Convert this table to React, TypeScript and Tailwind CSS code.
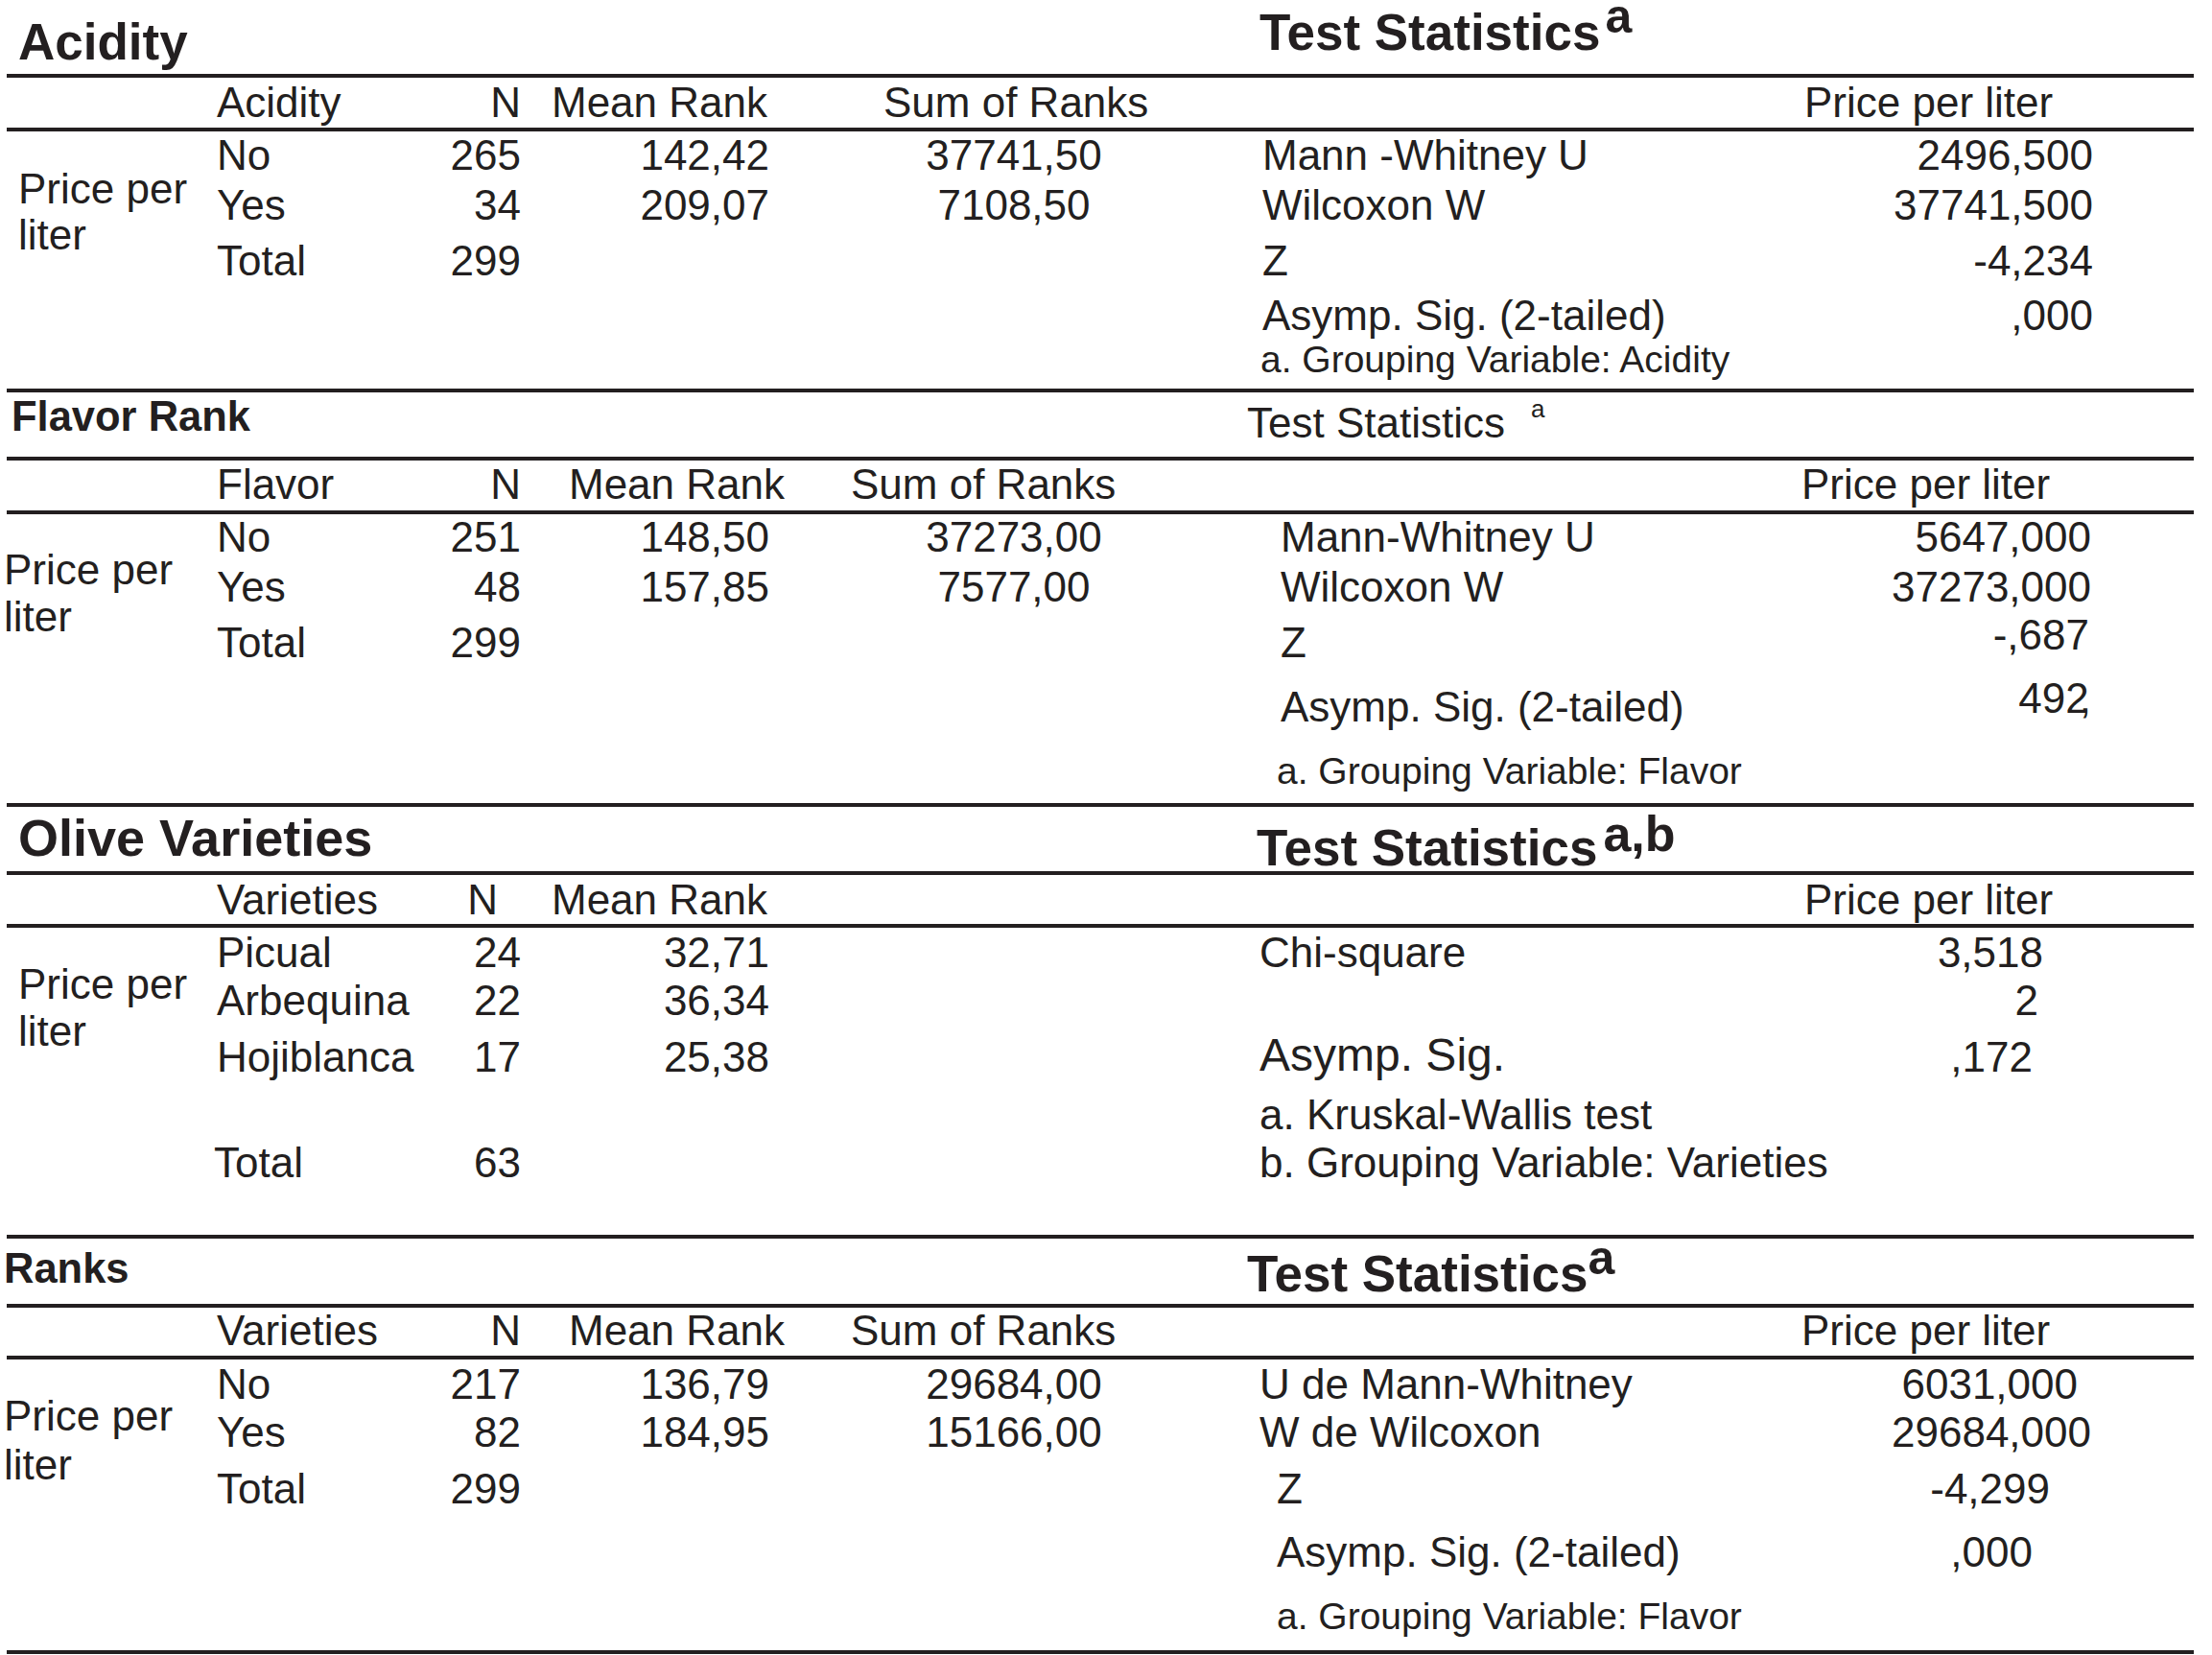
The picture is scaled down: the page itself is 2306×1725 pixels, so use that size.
import type { ReactNode } from "react";

function Rule() {
    return <div className="ml-[7px] h-[4px] w-[2280px] bg-[#231f20]" />;
}

type DataRowProps = {
    className: string;
    cat: ReactNode;
    n?: string;
    mean?: string;
    sum?: string;
};

function DataRow({ className, cat, n, mean, sum }: DataRowProps) {
    return (
        <div className={`flex ${className}`}>
            <div className="w-[230px]">{cat}</div>
            <div className="w-[87px] text-right">{n}</div>
            <div className="w-[259px] text-right">{mean}</div>
            <div className="w-[510px] text-center">{sum}</div>
        </div>
    );
}

type StatRowProps = {
    className: string;
    label?: ReactNode;
    value?: ReactNode;
};

function StatRow({ className, label, value }: StatRowProps) {
    return (
        <div className={`flex items-start justify-between ${className}`}>
            <span>{label}</span>
            <span>{value}</span>
        </div>
    );
}

export default function App() {
    return (
        <div className="min-h-[1725px] w-[2306px] whitespace-nowrap bg-white font-['Liberation_Sans',Arial,Helvetica,sans-serif] text-[44px] leading-[44px] text-[#231f20]">
            {/* Acidity */}
            <section>
                <div className="flex h-[77px]">
                    <div className="w-[1300px] pl-[19px] pt-[17px] text-[53px] font-bold leading-[53px]">
                        Acidity
                    </div>
                    <div className="flex items-start pl-[13px]">
                        <div className="mt-[7px] text-[53px] font-bold leading-[53px]">Test Statistics</div>
                        <div className="ml-[5px] mt-[7px] text-[50px] font-bold leading-[20px]">a</div>
                    </div>
                </div>
                <Rule />
                <div className="flex h-[52px] pt-[4px]">
                    <div className="w-[226px]" />
                    <div className="w-[230px]">Acidity</div>
                    <div className="w-[87px] text-right">N</div>
                    <div className="w-[259px] pl-[32px]">Mean Rank</div>
                    <div className="w-[510px] pl-[119px]">Sum of Ranks</div>
                    <div className="pl-[569px]">Price per liter</div>
                </div>
                <Rule />
                <div className="flex h-[268px]">
                    <div className="w-[226px] pl-[19px] pt-[36px] leading-[48px]">
                        Price per
                        <br />
                        liter
                    </div>
                    <div className="flex w-[1086px] flex-col pt-[3px]">
                        <DataRow className="h-[52px]" cat="No" n="265" mean="142,42" sum="37741,50" />
                        <DataRow className="h-[58px]" cat="Yes" n="34" mean="209,07" sum="7108,50" />
                        <DataRow className="h-[44px]" cat="Total" n="299" />
                    </div>
                    <div className="flex flex-col pt-[3px]">
                        <StatRow className="h-[52px] w-[870px] pl-[4px]" label="Mann -Whitney U" value="2496,500" />
                        <StatRow className="h-[58px] w-[870px] pl-[4px]" label="Wilcoxon W" value="37741,500" />
                        <StatRow className="h-[57px] w-[870px] pl-[4px]" label="Z" value="-4,234" />
                        <StatRow className="h-[48px] w-[870px] pl-[4px]" label="Asymp. Sig. (2-tailed)" value=",000" />
                        <div className="pl-[2px] text-[39px] leading-[39px]">a. Grouping Variable: Acidity</div>
                    </div>
                </div>
                <Rule />
            </section>

            {/* Flavor Rank */}
            <section>
                <div className="flex h-[67px]">
                    <div className="w-[1300px] pl-[12px] pt-[4px] text-[43.5px] font-bold leading-[43.5px]">
                        Flavor Rank
                    </div>
                    <div className="flex items-start">
                        <div className="mt-[10px]">Test Statistics</div>
                        <div className="ml-[27px] mt-[7px] text-[26px] leading-[20px]">a</div>
                    </div>
                </div>
                <Rule />
                <div className="flex h-[52px] pt-[3px]">
                    <div className="w-[226px]" />
                    <div className="w-[230px]">Flavor</div>
                    <div className="w-[87px] text-right">N</div>
                    <div className="w-[276px] pl-[50px]">Mean Rank</div>
                    <div className="w-[493px] pl-[68px]">Sum of Ranks</div>
                    <div className="pl-[566px]">Price per liter</div>
                </div>
                <Rule />
                <div className="flex h-[301px]">
                    <div className="w-[226px] pl-[4px] pt-[33px] leading-[49px]">
                        Price per
                        <br />
                        liter
                    </div>
                    <div className="flex w-[1086px] flex-col pt-[2px]">
                        <DataRow className="h-[52px]" cat="No" n="251" mean="148,50" sum="37273,00" />
                        <DataRow className="h-[58px]" cat="Yes" n="48" mean="157,85" sum="7577,00" />
                        <DataRow className="h-[44px]" cat="Total" n="299" />
                    </div>
                    <div className="flex flex-col pt-[2px]">
                        <StatRow className="h-[52px] w-[868px] pl-[23px]" label="Mann-Whitney U" value="5647,000" />
                        <StatRow className="h-[58px] w-[868px] pl-[23px]" label="Wilcoxon W" value="37273,000" />
                        <StatRow
                            className="h-[67px] w-[866px] pl-[23px]"
                            label="Z"
                            value={<span className="-mt-[8px] block">-,687</span>}
                        />
                        <StatRow
                            className="h-[69px] w-[868px] pl-[23px]"
                            label="Asymp. Sig. (2-tailed)"
                            value={
                                <span className="-mt-[9px] block">
                                    492<span className="-ml-[10px]">,</span>
                                </span>
                            }
                        />
                        <div className="pl-[19px] text-[39px] leading-[39px]">a. Grouping Variable: Flavor</div>
                    </div>
                </div>
                <Rule />
            </section>

            {/* Olive Varieties */}
            <section>
                <div className="flex h-[67px]">
                    <div className="w-[1300px] pl-[19px] pt-[5px] text-[54px] font-bold leading-[54px]">
                        Olive Varieties
                    </div>
                    <div className="flex items-start pl-[10px]">
                        <div className="mt-[16px] text-[53px] font-bold leading-[53px]">Test Statistics</div>
                        <div className="ml-[6px] mt-[18px] text-[52px] font-bold leading-[20px]">a,b</div>
                    </div>
                </div>
                <Rule />
                <div className="flex h-[51px] pt-[4px]">
                    <div className="w-[226px]" />
                    <div className="w-[230px]">Varieties</div>
                    <div className="w-[87px] pr-[24px] text-right">N</div>
                    <div className="w-[259px] pl-[32px]">Mean Rank</div>
                    <div className="w-[510px]" />
                    <div className="pl-[569px]">Price per liter</div>
                </div>
                <Rule />
                <div className="flex h-[320px]">
                    <div className="w-[226px] pl-[19px] pt-[34px] leading-[49px]">
                        Price per
                        <br />
                        liter
                    </div>
                    <div className="flex w-[1086px] flex-col pt-[4px]">
                        <DataRow className="h-[50px]" cat="Picual" n="24" mean="32,71" />
                        <DataRow className="h-[59px]" cat="Arbequina" n="22" mean="36,34" />
                        <DataRow className="h-[110px]" cat="Hojiblanca" n="17" mean="25,38" />
                        <DataRow className="h-[44px]" cat={<span className="-ml-[3px]">Total</span>} n="63" />
                    </div>
                    <div className="flex flex-col pt-[4px]">
                        <StatRow className="h-[50px] w-[818px] pl-[1px]" label="Chi-square" value="3,518" />
                        <StatRow className="h-[59px] w-[813px] pl-[1px]" value="2" />
                        <StatRow
                            className="h-[60px] w-[807px] pl-[1px]"
                            label={<span className="-mt-[4px] block text-[48px] leading-[48px]">Asymp. Sig.</span>}
                            value=",172"
                        />
                        <div className="h-[50px] pl-[1px]">a. Kruskal-Wallis test</div>
                        <div className="pl-[1px]">b. Grouping Variable: Varieties</div>
                    </div>
                </div>
                <Rule />
            </section>

            {/* Ranks */}
            <section>
                <div className="flex h-[68px]">
                    <div className="w-[1300px] pl-[4px] pt-[10px] text-[43.5px] font-bold leading-[43.5px]">
                        Ranks
                    </div>
                    <div className="flex items-start">
                        <div className="mt-[10px] text-[53px] font-bold leading-[53px]">Test Statistics</div>
                        <div className="mt-[10px] text-[50px] font-bold leading-[20px]">a</div>
                    </div>
                </div>
                <Rule />
                <div className="flex h-[50px] pt-[2px]">
                    <div className="w-[226px]" />
                    <div className="w-[230px]">Varieties</div>
                    <div className="w-[87px] text-right">N</div>
                    <div className="w-[276px] pl-[50px]">Mean Rank</div>
                    <div className="w-[493px] pl-[68px]">Sum of Ranks</div>
                    <div className="pl-[566px]">Price per liter</div>
                </div>
                <Rule />
                <div className="flex h-[303px]">
                    <div className="w-[226px] pl-[4px] pt-[33px] leading-[51px]">
                        Price per
                        <br />
                        liter
                    </div>
                    <div className="flex w-[1086px] flex-col pt-[4px]">
                        <DataRow className="h-[50px]" cat="No" n="217" mean="136,79" sum="29684,00" />
                        <DataRow className="h-[59px]" cat="Yes" n="82" mean="184,95" sum="15166,00" />
                        <DataRow className="h-[44px]" cat="Total" n="299" />
                    </div>
                    <div className="flex flex-col pt-[4px]">
                        <StatRow className="h-[50px] w-[854px] pl-[1px]" label="U de Mann-Whitney" value="6031,000" />
                        <StatRow className="h-[59px] w-[868px] pl-[1px]" label="W de Wilcoxon" value="29684,000" />
                        <StatRow className="h-[66px] w-[825px] pl-[19px]" label="Z" value="-4,299" />
                        <StatRow className="h-[69px] w-[807px] pl-[19px]" label="Asymp. Sig. (2-tailed)" value=",000" />
                        <div className="pl-[19px] text-[39px] leading-[39px]">a. Grouping Variable: Flavor</div>
                    </div>
                </div>
                <Rule />
            </section>
        </div>
    );
}
